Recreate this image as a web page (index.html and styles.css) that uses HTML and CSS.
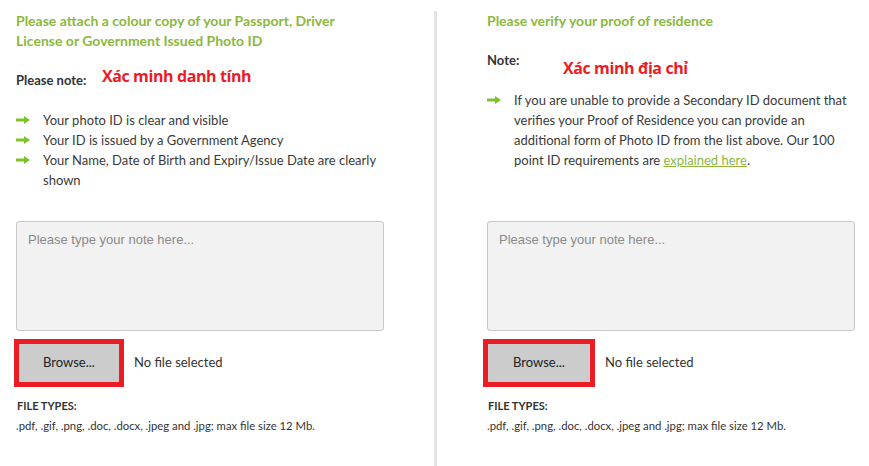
FILE: index.html
```html
<!DOCTYPE html>
<html lang="en">
<head>
    <meta charset="UTF-8">
    <title>Verify your identity</title>
    <link rel="stylesheet" href="styles.css">
</head>
<body>

    <div class="verify">

        <!-- Photo ID -->
        <div class="column column-left">
            <div class="info">
                <h3 class="title">Please attach a colour copy of your Passport, Driver License or Government Issued Photo ID</h3>
                <p class="note">Please note:</p>
                <span class="mark mark-id">Xác minh danh tính</span>
                <ul class="checklist">
                    <li>Your photo ID is clear and visible</li>
                    <li>Your ID is issued by a Government Agency</li>
                    <li>Your Name, Date of Birth and Expiry/Issue Date are clearly shown</li>
                </ul>
            </div>
            <textarea class="note-box" placeholder="Please type your note here..."></textarea>
            <div class="upload">
                <span class="highlight"><button class="browse">Browse...</button></span>
                <span class="file-name">No file selected</span>
            </div>
            <p class="types-label">FILE TYPES:</p>
            <p class="types">.pdf, .gif, .png, .doc, .docx, .jpeg and .jpg; max file size 12 Mb.</p>
        </div>

        <div class="divider"></div>

        <!-- Proof of residence -->
        <div class="column column-right">
            <div class="info">
                <h3 class="title">Please verify your proof of residence</h3>
                <p class="note">Note:</p>
                <span class="mark mark-address">Xác minh địa chỉ</span>
                <ul class="checklist">
                    <li>If you are unable to provide a Secondary ID document that verifies your Proof of Residence you can provide an additional form of Photo ID from the list above. Our 100 point ID requirements are <a href="#">explained here</a>.</li>
                </ul>
            </div>
            <textarea class="note-box" placeholder="Please type your note here..."></textarea>
            <div class="upload">
                <span class="highlight highlight-wide"><button class="browse">Browse...</button></span>
                <span class="file-name">No file selected</span>
            </div>
            <p class="types-label">FILE TYPES:</p>
            <p class="types">.pdf, .gif, .png, .doc, .docx, .jpeg and .jpg; max file size 12 Mb.</p>
        </div>

    </div>

</body>
</html>
```

FILE: styles.css
```css
body {
    margin: 0;
    background: #fff;
    font-family: Lato, "Open Sans", sans-serif;
    color: #3a3a3a;
}

.verify {
    display: flex;
    height: 466px;
}

.column {
    flex-shrink: 0;
    width: 368px;
    padding-top: 11px;
}

.column-left {
    padding-left: 16px;
    padding-right: 50px;
}

.column-right {
    padding-left: 50px;
}

/* Grey rule between the two columns */
.divider {
    flex-shrink: 0;
    width: 3px;
    margin-top: 11px;
    background-color: #e5e5e5;
}

.info {
    position: relative;
    height: 210px;
}

.title {
    margin: 0;
    font-size: 14px;
    line-height: 20px;
    font-weight: bold;
    color: #8bb83d;
}

.note {
    margin: 19px 0 0 0;
    font-size: 13px;
    line-height: 20px;
    font-weight: bold;
    color: #333;
}

/* Red annotations laid over the page */
.mark {
    position: absolute;
    font-family: "Open Sans", sans-serif;
    font-size: 16px;
    font-weight: bold;
    letter-spacing: -0.4px;
    color: #ec1c24;
    white-space: nowrap;
}

.mark-id {
    left: 86px;
    top: 54px;
}

.mark-address {
    left: 76px;
    top: 46px;
}

.checklist {
    list-style: none;
    margin: 20px 0 0 0;
    padding: 0;
}

.checklist li {
    position: relative;
    padding-left: 27px;
    font-size: 13px;
    line-height: 20px;
    color: #3a3a3a;
}

.checklist li::before {
    content: "";
    position: absolute;
    left: 0;
    top: 6px;
    width: 14px;
    height: 8px;
    background: url("data:image/svg+xml,%3Csvg xmlns='http://www.w3.org/2000/svg' width='14' height='8' viewBox='0 0 14 8'%3E%3Crect x='0' y='2.5' width='9' height='3' fill='%237cc22c'/%3E%3Cpolygon points='8,0 14,4 8,8' fill='%237cc22c'/%3E%3C/svg%3E") no-repeat;
}

.checklist a {
    color: #8bb83d;
}

.note-box {
    display: block;
    box-sizing: border-box;
    width: 368px;
    height: 110px;
    margin: 0;
    padding: 10px 11px;
    background-color: #f2f2f2;
    border: 1px solid #c8c8c8;
    border-radius: 3px;
    font-family: "Liberation Sans", Arial, sans-serif;
    font-size: 13px;
    resize: none;
}

.note-box::placeholder {
    color: #8a8a8a;
}

.upload {
    display: flex;
    align-items: center;
    margin-top: 8px;
}

.highlight {
    display: block;
    margin-left: -2px;
    border: 5px solid #ec1c24;
}

.highlight-wide {
    margin-left: -4px;
    padding: 0 1px;
    background-color: #cccccc;
}

.browse {
    display: block;
    width: 100px;
    height: 38px;
    padding: 0 0 3px 0;
    background-color: #cccccc;
    border: none;
    font-family: Lato, "Open Sans", sans-serif;
    font-size: 13px;
    color: #222;
}

.file-name {
    margin: 0 0 3px 10px;
    font-size: 13px;
    color: #333;
}

.types-label {
    margin: 11px 0 0 1px;
    font-size: 11px;
    line-height: 16px;
    font-weight: bold;
    color: #333;
}

.types {
    margin: 4px 0 0 0;
    font-size: 11.3px;
    line-height: 16px;
    color: #333;
}
```
